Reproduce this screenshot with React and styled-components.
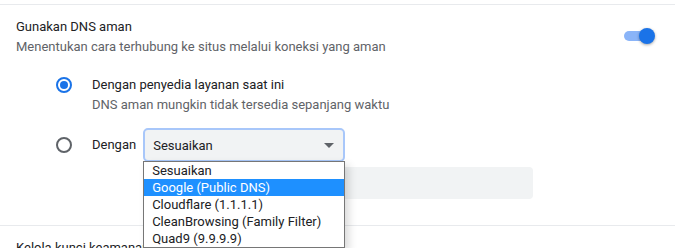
import React from 'react'
import styled, { createGlobalStyle } from 'styled-components'

const GlobalStyle = createGlobalStyle`
  html, body {
    margin: 0;
    background: #fff;
  }
  body {
    font-family: Roboto, "Liberation Sans", sans-serif;
    font-size: 13px;
    color: #202124;
  }
`

const options = [
  'Sesuaikan',
  'Google (Public DNS)',
  'Cloudflare (1.1.1.1)',
  'CleanBrowsing (Family Filter)',
  'Quad9 (9.9.9.9)',
]

const App = () => {
  return (
    <>
      <GlobalStyle />
      <Page>
        <Section>
          <HeaderRow>
            <div>
              <Title>Gunakan DNS aman</Title>
              <Secondary>Menentukan cara terhubung ke situs melalui koneksi yang aman</Secondary>
            </div>
            <Toggle>
              <span className="knob" />
            </Toggle>
          </HeaderRow>
          <RadioGroup>
            <RadioRow>
              <Radio checked />
              <div>
                <Label>Dengan penyedia layanan saat ini</Label>
                <Secondary>DNS aman mungkin tidak tersedia sepanjang waktu</Secondary>
              </div>
            </RadioRow>
            <RadioRow $center>
              <Radio />
              <Label>Dengan</Label>
              <SelectWrap>
                <Select>
                  <span>Sesuaikan</span>
                  <Arrow />
                </Select>
                <DropList>
                  {options.map((o, i) => (
                    <Option key={o} $active={i === 1}>{o}</Option>
                  ))}
                </DropList>
              </SelectWrap>
            </RadioRow>
            <InputBox />
          </RadioGroup>
        </Section>
        <Section>
          <Title>Kelola kunci keamanan</Title>
        </Section>
      </Page>
    </>
  )
}

const Page = styled.div`
  padding-top: 4px;
  height: 248px;
  overflow: hidden;
  box-sizing: border-box;
`
const Section = styled.div`
  border-top: 1px solid #e8eaed;
  padding: 12px 20px 0 16px;
`
const HeaderRow = styled.div`
  display: flex;
  justify-content: space-between;
  align-items: flex-start;
`
const Title = styled.div`
  line-height: 20px;
  color: #202124;
`
const Secondary = styled.div`
  line-height: 19px;
  color: #5f6368;
`
const Label = styled.div`
  line-height: 20px;
  color: #202124;
`
const Toggle = styled.div`
  position: relative;
  width: 26px;
  height: 10px;
  margin-top: 14px;
  margin-right: 5px;
  border-radius: 5px;
  background: #8ab4f8;
  .knob {
    position: absolute;
    right: -5px;
    top: -3px;
    width: 16px;
    height: 16px;
    border-radius: 50%;
    background: #1a73e8;
    box-shadow: 0 1px 3px rgba(0, 0, 0, 0.35);
  }
`
const RadioGroup = styled.div`
  padding: 19px 0 26px 40px;
  display: flex;
  flex-direction: column;
  gap: 14px;
`
const RadioRow = styled.div`
  display: flex;
  align-items: ${(p) => (p.$center ? 'center' : 'flex-start')};
`
const Radio = styled.span`
  box-sizing: border-box;
  flex: none;
  width: 16px;
  height: 16px;
  margin: ${(p) => (p.checked ? '2px' : '0')} 20px 0 0;
  border-radius: 50%;
  border: 2px solid ${(p) => (p.checked ? '#1a73e8' : '#5f6368')};
  position: relative;
  &::after {
    content: "";
    display: ${(p) => (p.checked ? 'block' : 'none')};
    position: absolute;
    left: 2px;
    top: 2px;
    width: 8px;
    height: 8px;
    border-radius: 50%;
    background: #1a73e8;
  }
`
const SelectWrap = styled.div`
  position: relative;
  margin-left: 7px;
`
const Select = styled.div`
  box-sizing: border-box;
  width: 202px;
  height: 34px;
  padding: 0 8px;
  display: flex;
  align-items: center;
  justify-content: space-between;
  background: #f1f3f4;
  border: 2px solid #a8c7fa;
  border-radius: 5px;
  color: #202124;
`
const Arrow = styled.span`
  width: 0;
  height: 0;
  margin-right: 1px;
  border-left: 5px solid transparent;
  border-right: 5px solid transparent;
  border-top: 5px solid #5f6368;
`
const DropList = styled.div`
  position: absolute;
  z-index: 2;
  left: 0;
  top: 33px;
  width: 200px;
  background: #fff;
  border: 1px solid #767676;
  box-shadow: 4px 4px 8px rgba(0, 0, 0, 0.15);
  font-size: 13px;
`
const Option = styled.div`
  height: 17px;
  line-height: 17px;
  padding-left: 8px;
  white-space: nowrap;
  color: ${(p) => (p.$active ? '#fff' : '#202124')};
  background: ${(p) => (p.$active ? '#1e90ff' : '#fff')};
`
const InputBox = styled.div`
  margin: -9px 0 0 91px;
  width: 386px;
  height: 32px;
  background: #f1f3f4;
  border-radius: 4px;
`

export default App
